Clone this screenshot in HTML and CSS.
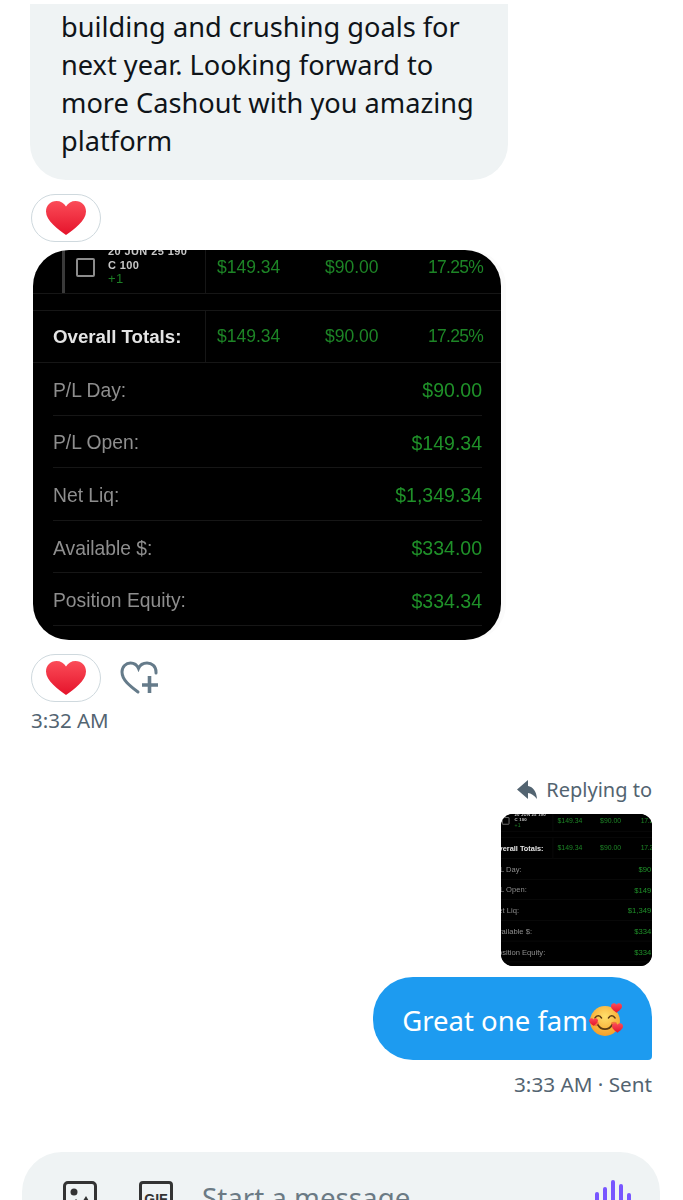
FILE: index.html
```html
<!DOCTYPE html>
<html lang="en">
<head>
    <meta charset="UTF-8">
    <meta name="viewport" content="width=device-width, initial-scale=1.0">
    <title>Messages</title>
    <link rel="stylesheet" href="styles.css">
</head>
<body>
    <svg class="defs" width="0" height="0">
        <defs>
            <linearGradient id="heartFill" x1="0" y1="0" x2="0" y2="1">
                <stop offset="0" stop-color="#fb4c58"/>
                <stop offset="1" stop-color="#e5132b"/>
            </linearGradient>
            <radialGradient id="faceFill" cx="0.5" cy="0.35" r="0.7">
                <stop offset="0" stop-color="#ffdf6b"/>
                <stop offset="1" stop-color="#f59a23"/>
            </radialGradient>
            <symbol id="heart" viewBox="0 0 40 34">
                <path d="M20 34C12 28 0 20 0 10.500C0 4.500 4.500 0 10.500 0C14.500 0 18 2 20 5.500C22 2 25.500 0 29.500 0C35.500 0 40 4.500 40 10.500C40 20 28 28 20 34Z" fill="url(#heartFill)"/>
            </symbol>
        </defs>
    </svg>

    <div class="thread">
        <div class="bubble-in">building and crushing goals for next year. Looking forward to more Cashout with you amazing platform</div>

        <div class="reaction-row first-reaction">
            <div class="reaction"><svg class="heart"><use href="#heart"/></svg></div>
        </div>

        <div class="shot-frame">
            <div class="shot">
                <div class="position-row">
                    <div class="position-name">
                        <span class="check"></span>
                        <div class="contract">
                            <div>20 JUN 25 190</div>
                            <div>C 100</div>
                            <div class="qty">+1</div>
                        </div>
                    </div>
                    <div class="num">$149.34</div>
                    <div class="num">$90.00</div>
                    <div class="num pct">17.25%</div>
                </div>
                <div class="totals-row">
                    <div class="totals-label">Overall Totals:</div>
                    <div class="num">$149.34</div>
                    <div class="num">$90.00</div>
                    <div class="num pct">17.25%</div>
                </div>
                <div class="detail-row"><span>P/L Day:</span><span class="val">$90.00</span></div>
                <div class="detail-row"><span>P/L Open:</span><span class="val">$149.34</span></div>
                <div class="detail-row"><span>Net Liq:</span><span class="val">$1,349.34</span></div>
                <div class="detail-row"><span>Available $:</span><span class="val">$334.00</span></div>
                <div class="detail-row"><span>Position Equity:</span><span class="val">$334.34</span></div>
            </div>
        </div>

        <div class="reaction-row">
            <div class="reaction"><svg class="heart"><use href="#heart"/></svg></div>
            <svg class="add-reaction" viewBox="0 0 38 34">
                <path d="M18 31C10 25 2 19 2 11C2 5.500 6 2 10.500 2C14 2 17 4 18.500 7.500C20 4 23 2 27 2C32 2 36 5.500 36 11V12" fill="none" stroke="#657b8a" stroke-width="3" stroke-linecap="round"/>
                <path d="M29.500 15V32M22 24H38" fill="none" stroke="#657b8a" stroke-width="3.600"/>
            </svg>
        </div>
        <div class="time">3:32 AM</div>

        <div class="outgoing">
            <div class="reply-label">
                <svg class="reply-icon" viewBox="0 0 20 20"><path d="M0 9.500L11 0V6C16 7 19.500 11 20 19C17 15 14 13.500 11 13V19Z" fill="#536471"/></svg>
                <span>Replying to</span>
            </div>
            <div class="thumb">
                <div class="shot">
                    <div class="position-row">
                        <div class="position-name">
                            <span class="check"></span>
                            <div class="contract">
                                <div>20 JUN 25 190</div>
                                <div>C 100</div>
                                <div class="qty">+1</div>
                            </div>
                        </div>
                        <div class="num">$149.34</div>
                        <div class="num">$90.00</div>
                        <div class="num pct">17.25%</div>
                    </div>
                    <div class="totals-row">
                        <div class="totals-label">Overall Totals:</div>
                        <div class="num">$149.34</div>
                        <div class="num">$90.00</div>
                        <div class="num pct">17.25%</div>
                    </div>
                    <div class="detail-row"><span>P/L Day:</span><span class="val">$90.00</span></div>
                    <div class="detail-row"><span>P/L Open:</span><span class="val">$149.34</span></div>
                    <div class="detail-row"><span>Net Liq:</span><span class="val">$1,349.34</span></div>
                    <div class="detail-row"><span>Available $:</span><span class="val">$334.00</span></div>
                    <div class="detail-row"><span>Position Equity:</span><span class="val">$334.34</span></div>
                </div>
            </div>
            <div class="bubble-out">
                <span>Great one fam</span>
                <svg class="face" viewBox="0 0 34 34">
                    <circle cx="16" cy="18" r="15" fill="url(#faceFill)"/>
                    <ellipse cx="7" cy="21" rx="3" ry="2.200" fill="#f2783c"/>
                    <ellipse cx="25" cy="21" rx="3" ry="2.200" fill="#f2783c"/>
                    <path d="M6 15C7.500 12 11 12 12.500 15M19.500 15C21 12 24.500 12 26 15M9 22C12 27.500 20 27.500 23 22" fill="none" stroke="#5c3a12" stroke-width="1.600" stroke-linecap="round"/>
                    <use href="#heart" x="22" y="0" width="11" height="10"/>
                    <use href="#heart" x="23" y="20" width="11" height="10"/>
                    <use href="#heart" x="0" y="15" width="9" height="8"/>
                </svg>
            </div>
            <div class="sent">3:33 AM · Sent</div>
        </div>
    </div>

    <div class="composer">
        <svg class="tool" viewBox="0 0 34 34">
            <rect x="1.500" y="1.500" width="31" height="31" rx="3.500" fill="none" stroke="#333" stroke-width="3"/>
            <circle cx="11" cy="11" r="3.500" fill="#333"/>
            <path d="M5 27L13 18L18 23L23 15L30 27Z" fill="#333"/>
        </svg>
        <div class="tool gif">GIF</div>
        <span class="placeholder">Start a message</span>
        <div class="voice">
            <span class="bar b1"></span>
            <span class="bar b2"></span>
            <span class="bar b3"></span>
            <span class="bar b4"></span>
            <span class="bar b5"></span>
        </div>
    </div>
</body>
</html>
```

FILE: styles.css
```css
html, body {
    height: 1200px;
    overflow: hidden;
}
body {
    margin: 0;
    background: #fff;
    font-family: "Noto Sans", Arial, sans-serif;
    color: #0f1419;
}
.defs {
    display: block;
    height: 0;
}
.thread {
    height: 1152px;
    padding: 4px 31px 0 30px;
    box-sizing: border-box;
}

/* incoming */
.bubble-in {
    width: 478px;
    height: 176px;
    box-sizing: border-box;
    padding: 4px 20px 0 31px;
    background: #eff3f4;
    border-radius: 0 0 36px 36px;
    font-size: 27.200px;
    line-height: 38px;
}
.reaction-row {
    display: flex;
    align-items: center;
    gap: 19px;
    margin-top: 14px;
    margin-left: 1px;
}
.first-reaction {
    margin-top: 14px;
}
.reaction {
    width: 70px;
    height: 48px;
    box-sizing: border-box;
    border: 1.500px solid #cfd9de;
    border-radius: 24px;
    display: flex;
    align-items: center;
    justify-content: center;
}
.heart {
    width: 40px;
    height: 34px;
}
.add-reaction {
    width: 38px;
    height: 34px;
}
.time {
    margin: 4px 0 0 1px;
    font-size: 20.500px;
    line-height: 28px;
    color: #536471;
}

/* screenshot inside the message */
.shot-frame {
    width: 468px;
    height: 390px;
    margin: 8px 0 14px 3px;
    border-radius: 36px;
    overflow: hidden;
    box-shadow: 5px 0 0 #fbfbfb;
}
.shot {
    width: 468px;
    height: 390px;
    background: #000;
    overflow: hidden;
    font-family: "Liberation Sans", Arial, sans-serif;
    filter: blur(0.3px);
}
.position-row, .totals-row {
    display: grid;
    grid-template-columns: 172px 120px 103px 1fr;
    border-bottom: 1px solid #161616;
}
.position-row {
    height: 44px;
    box-sizing: border-box;
    margin-bottom: 16px;
}
.totals-row {
    height: 53px;
    box-sizing: border-box;
    align-items: stretch;
    border-top: 1px solid #161616;
}
.position-name {
    display: flex;
    margin-left: 29px;
    padding-left: 11px;
    border-left: 3px solid #3a3a3a;
}
.check {
    width: 15px;
    height: 15px;
    margin: 8px 0 0 0;
    border: 2px solid #8c8c8c;
    border-radius: 2px;
}
.contract {
    margin: -6px 0 0 13px;
    font-size: 11px;
    font-weight: bold;
    letter-spacing: 0.400px;
    line-height: 14px;
    color: #c8c8c8;
}
.qty {
    font-size: 13px;
    font-weight: normal;
    color: #1d7f25;
}
.num {
    display: flex;
    align-items: center;
    font-size: 17.500px;
    color: #1d8526;
}
.pct {
    letter-spacing: -0.700px;
}
.position-row .num {
    padding-bottom: 8px;
}
.position-row .num:nth-child(2), .totals-row .num:nth-child(2) {
    padding-left: 11px;
    border-left: 1px solid #161616;
}
.totals-label {
    display: flex;
    align-items: center;
    padding-left: 20px;
    font-size: 18.700px;
    font-weight: bold;
    color: #e4e4e4;
}
.detail-row {
    display: flex;
    justify-content: space-between;
    align-items: center;
    height: 52.600px;
    box-sizing: border-box;
    padding-top: 4px;
    margin: 0 19px 0 20px;
    border-bottom: 1px solid #161616;
    font-size: 19.300px;
    color: #8e8e8e;
}
.val {
    font-size: 19.500px;
    color: #1f9129;
}

/* outgoing */
.outgoing {
    display: flex;
    flex-direction: column;
    align-items: flex-end;
    margin-top: 42px;
}
.reply-label {
    display: flex;
    align-items: center;
    gap: 9px;
    font-size: 20px;
    line-height: 28px;
    color: #536471;
}
.reply-icon {
    width: 20px;
    height: 20px;
}
.thumb {
    width: 151px;
    height: 152px;
    margin-top: 10px;
    border-radius: 12px;
    overflow: hidden;
    background: #000;
}
.thumb .shot {
    margin-left: -16px;
    transform: scale(0.394);
    transform-origin: 0 0;
}
.bubble-out {
    display: flex;
    align-items: center;
    height: 83px;
    box-sizing: border-box;
    margin-top: 11px;
    padding: 3px 29px 0 29px;
    background: #1d9bf0;
    border-radius: 40px 40px 4px 40px;
    font-size: 27.500px;
    color: #fff;
}
.face {
    width: 34px;
    height: 34px;
    margin-left: 1px;
}
.sent {
    margin-top: 10px;
    font-size: 20.700px;
    line-height: 28px;
    color: #536471;
}

/* composer, runs off the bottom of the window */
.composer {
    display: flex;
    align-items: flex-start;
    width: 638px;
    height: 90px;
    box-sizing: border-box;
    margin-left: 22px;
    padding: 29px 29px 0 41px;
    background: #eff3f4;
    border-radius: 40px;
}
.tool {
    width: 34px;
    height: 34px;
    box-sizing: border-box;
    flex: none;
}
.gif {
    margin-left: 42px;
    border: 3px solid #333;
    border-radius: 4px;
    font-size: 14px;
    font-weight: bold;
    line-height: 30px;
    text-align: center;
    color: #333;
    font-family: "Liberation Sans", Arial, sans-serif;
}
.placeholder {
    margin-left: 29px;
    font-size: 27.700px;
    line-height: 32px;
    color: #6b7a84;
    flex: 1;
}
.voice {
    display: flex;
    gap: 4px;
    align-items: flex-end;
    height: 40px;
    margin-top: -1px;
}
.bar {
    width: 4px;
    background: #7856ff;
    border-radius: 2px;
}
.b1 { height: 28px; }
.b2 { height: 33px; }
.b3 { height: 40px; }
.b4 { height: 36px; }
.b5 { height: 27px; }
```
